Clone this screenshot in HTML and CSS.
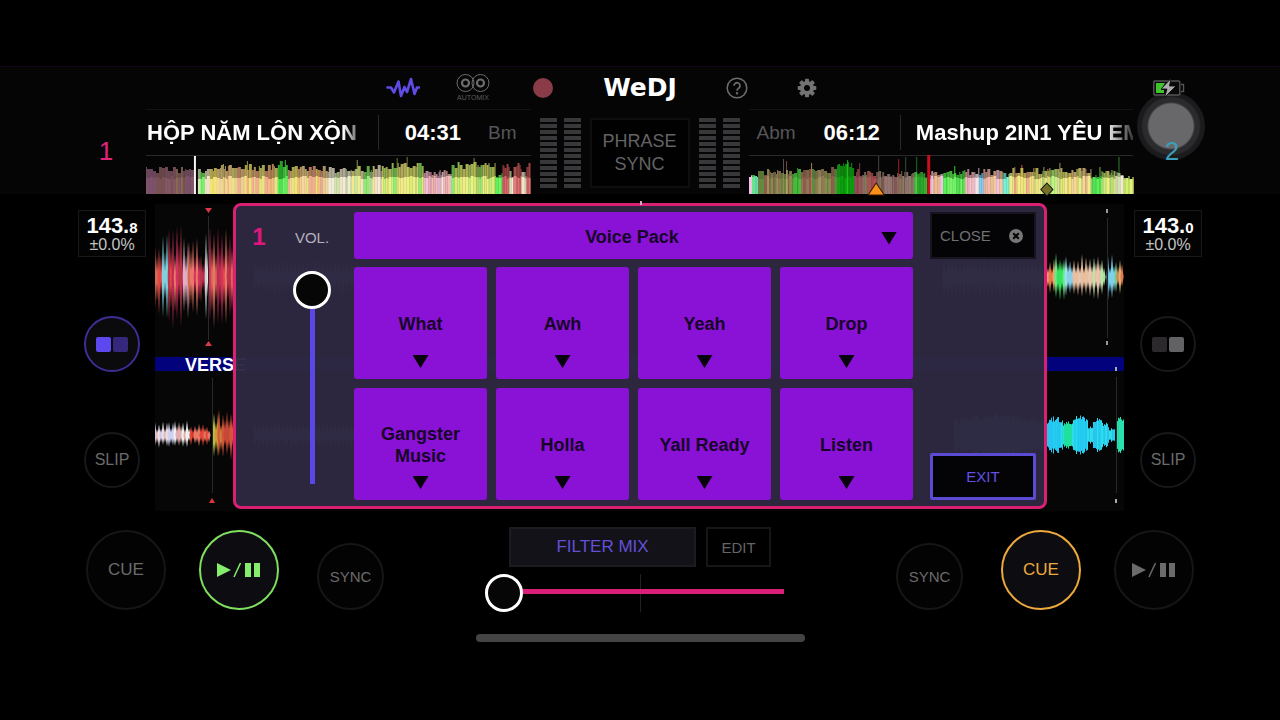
FILE: index.html
```html
<!DOCTYPE html>
<html lang="en">
<head>
<meta charset="utf-8">
<meta name="viewport" content="width=device-width, initial-scale=1">
<title>WeDJ</title>
<link rel="stylesheet" href="styles.css">
</head>
<body>
<header class="top">
  <nav class="toolbar" aria-label="Main">
    <div class="tools tools-left">
      <button class="tool" aria-label="Waveform view">
        <svg width="34" height="22" viewBox="0 0 34 22" fill="none" stroke="#5f4be6" stroke-width="2.6" stroke-linejoin="round" stroke-linecap="round"><path d="M1.500 10.500h3.500l3 5 4.500-11L15 19l3.500-9 2.500 5 4-13 3.500 15 2.500-6.500h2"/></svg>
      </button>
      <button class="tool automix">
        <svg width="34" height="20" viewBox="0 0 34 20" fill="none" stroke="#6c6c6c"><circle cx="9.500" cy="10" r="8.500"/><circle cx="24.500" cy="10" r="8.500"/><circle cx="9.500" cy="10" r="3.500" stroke-width="2.200"/><circle cx="24.500" cy="10" r="3.500" stroke-width="2.200"/></svg>
        <span>AUTOMIX</span>
      </button>
      <button class="tool" aria-label="Record"><span class="record"></span></button>
    </div>
    <h1 class="logo">WeDJ</h1>
    <div class="tools tools-right">
      <button class="tool" aria-label="Help">
        <svg width="22" height="22" viewBox="0 0 22 22" fill="none" stroke="#6e6e6e" stroke-width="1.500"><circle cx="11" cy="11" r="9.800"/><path d="M8 8.800a3 3 0 1 1 4.600 2.500c-1.100.7-1.600 1.200-1.600 2.500" stroke-width="1.700"/><circle cx="11" cy="16.300" r=".5"/></svg>
      </button>
      <button class="tool" aria-label="Settings">
        <svg width="20" height="20" viewBox="-10 -10 20 20" fill="#737373"><rect x="-2" y="-9.300" width="4" height="18.600" rx=".8"/><rect x="-2" y="-9.300" width="4" height="18.600" rx=".8" transform="rotate(45)"/><rect x="-2" y="-9.300" width="4" height="18.600" rx=".8" transform="rotate(90)"/><rect x="-2" y="-9.300" width="4" height="18.600" rx=".8" transform="rotate(135)"/><circle r="7"/><circle r="3" fill="#050506"/></svg>
      </button>
      <svg class="battery" width="32" height="20" viewBox="0 0 32 20" aria-label="Battery charging"><rect x=".8" y="3" width="26" height="14" rx="1" fill="#0a0a0a" stroke="#555" stroke-width="1.400"/><path d="M28 6.500h2.500v7H28" fill="none" stroke="#555" stroke-width="1.400"/><path d="M3 5h9l-4 7h3v3H3z" fill="#3fc32c"/><path d="M18 .5 8 11h6l-2.500 8.500L23 8h-6.500z" fill="#a9a9ae" stroke="#050506" stroke-width=".8"/></svg>
    </div>
  </nav>

  <div class="decks">
    <div class="deck-no deck-no-1">1</div>
    <section class="deck">
      <div class="info">
        <div class="title">HỘP NĂM LỘN XỘN</div>
        <div class="time">04:31</div>
        <div class="key">Bm</div>
      </div>
      <svg class="overview" id="overview1" viewBox="0 0 385 38" preserveAspectRatio="none"></svg>
    </section>
    <div class="mixer">
      <div class="meter"></div>
      <div class="meter"></div>
      <button class="phrase">PHRASE<br>SYNC</button>
      <div class="meter"></div>
      <div class="meter"></div>
    </div>
    <section class="deck deck-2">
      <div class="info">
        <div class="key">Abm</div>
        <div class="time">06:12</div>
        <div class="title">Mashup 2IN1 YÊU EM</div>
      </div>
      <svg class="overview" id="overview2" viewBox="0 0 384 38" preserveAspectRatio="none"></svg>
    </section>
    <div class="deck-no deck-no-2"><span class="touch"></span><span class="digit">2</span></div>
  </div>
</header>

<main class="stage">
  <aside class="side side-1">
    <button class="bpm"><strong>143.<small>8</small></strong><span>±0.0%</span></button>
    <button class="round pads-toggle on" aria-label="Pads"><i></i><i></i></button>
    <button class="round">SLIP</button>
  </aside>

  <div class="waves">
    <div class="lane lane-top"><svg id="lane1" width="200" height="153"></svg><svg id="lane2" width="200" height="153"></svg></div>
    <div class="phrase-bar">VERSE</div>
    <div class="lane"><svg id="lane3" width="200" height="140"></svg><svg id="lane4" width="200" height="154" class="lifted"></svg></div>

    <section class="sampler" aria-label="Sampler">
      <div class="volume">
        <span class="volume-deck">1</span>
        <label for="vol">VOL.</label>
        <input id="vol" class="slider slider-v" type="range" min="0" max="100" value="0">
      </div>
      <div class="bank">
        <div class="pack">
          <select aria-label="Sample pack"><option>Voice Pack</option></select>
          <span class="arrow"></span>
        </div>
        <div class="pads">
          <button class="pad"><span>What</span><i class="arrow"></i></button>
          <button class="pad"><span>Awh</span><i class="arrow"></i></button>
          <button class="pad"><span>Yeah</span><i class="arrow"></i></button>
          <button class="pad"><span>Drop</span><i class="arrow"></i></button>
          <button class="pad"><span>Gangster Music</span><i class="arrow"></i></button>
          <button class="pad"><span>Holla</span><i class="arrow"></i></button>
          <button class="pad"><span>Yall Ready</span><i class="arrow"></i></button>
          <button class="pad"><span>Listen</span><i class="arrow"></i></button>
        </div>
      </div>
      <div class="actions">
        <button class="close">CLOSE
          <svg width="14" height="14" viewBox="0 0 14 14"><circle cx="7" cy="7" r="7" fill="#777"/><path d="m4.200 4.200 5.600 5.600m0-5.600-5.600 5.600" stroke="#050506" stroke-width="2"/></svg>
        </button>
        <button class="exit">EXIT</button>
      </div>
    </section>
  </div>

  <aside class="side side-2">
    <button class="bpm"><strong>143.<small>0</small></strong><span>±0.0%</span></button>
    <button class="round pads-toggle" aria-label="Pads"><i></i><i></i></button>
    <button class="round">SLIP</button>
  </aside>
</main>

<footer class="controls">
  <div class="transport">
    <button class="big">CUE</button>
    <button class="big playing" aria-label="Play / pause"><svg width="44" height="16" viewBox="0 0 44 16" fill="currentColor"><path d="M0 1v14l14-7z"/><path d="M23.500 1 17 15" stroke="currentColor" stroke-width="1.500"/><path d="M28 1h6v14h-6zM37 1h6v14h-6z"/></svg></button>
    <button class="sync">SYNC</button>
  </div>
  <div class="crossfader">
    <div class="fx">
      <button class="filter">FILTER MIX</button>
      <button class="edit">EDIT</button>
    </div>
    <div class="fader"><input class="slider slider-h" type="range" min="0" max="100" value="0" aria-label="Crossfader"></div>
  </div>
  <div class="transport">
    <button class="sync">SYNC</button>
    <button class="big cued">CUE</button>
    <button class="big" aria-label="Play / pause"><svg width="44" height="16" viewBox="0 0 44 16" fill="currentColor"><path d="M0 1v14l14-7z"/><path d="M23.500 1 17 15" stroke="currentColor" stroke-width="1.500"/><path d="M28 1h6v14h-6zM37 1h6v14h-6z"/></svg></button>
  </div>
</footer>
<div class="home"></div>
<script src="waves.js"></script>
</body>
</html>
```

FILE: styles.css
```css
* { box-sizing: border-box; }

body {
  margin: 0;
  padding-top: 66px;
  min-height: 100vh;
  background: #000;
  color: #fff;
  font-family: "Liberation Sans", Arial, sans-serif;
  font-size: 15px;
  overflow-x: hidden;
}

button, select {
  margin: 0;
  padding: 0;
  border: 0;
  background: none;
  color: inherit;
  font: inherit;
}

svg { display: block; }

/* Toolbar */
.top { background: #050506; border-top: 1px solid #14041a; }

.toolbar {
  display: grid;
  grid-template-columns: 1fr auto 1fr;
  align-items: center;
  height: 42px;
}
.tools { display: flex; align-items: center; gap: 26px; }
.tools-left { justify-content: flex-end; margin-right: 36px; }
.tools-right { margin-left: 36px; padding-right: 95px; }
.tool {
  width: 44px;
  height: 36px;
  display: flex;
  flex-direction: column;
  align-items: center;
  justify-content: center;
}
.automix { color: #5c5c5c; font-size: 7px; line-height: 10px; }
.record { width: 20px; height: 20px; border-radius: 50%; background: #893b47; }
.battery { position: relative; z-index: 1; margin-left: auto; }
.logo {
  margin: 0;
  width: 78px;
  text-align: center;
  font: bold 25px/28px "DejaVu Sans", sans-serif;
}

/* Deck headers */
.decks {
  display: grid;
  grid-template-columns: 146px 1fr 218px 1fr 147px;
  height: 85px;
}
.deck { min-width: 0; border-top: 1px solid #141415; }
.deck-no {
  position: relative;
  display: flex;
  align-items: center;
  justify-content: center;
  font-size: 26px;
}
.deck-no-1 { padding-left: 66px; color: #e0247c; }
.deck-no-2 { padding-right: 69px; color: #3b9fba; }
.digit { position: relative; }
.touch {
  position: absolute;
  left: 4px;
  top: -17px;
  width: 68px;
  height: 68px;
  border-radius: 50%;
  background: radial-gradient(circle, #68686a 22px, #2b2b2d 24px, #2b2b2d 28px, #1b1b1d 30px);
}
.info {
  display: flex;
  align-items: center;
  height: 46px;
  border-bottom: 1px solid #29292b;
}
.title {
  flex: 1;
  min-width: 0;
  overflow: hidden;
  white-space: nowrap;
  font-weight: bold;
  font-size: 22px;
  line-height: 35px;
}
.info .title {
  margin-right: 18px;
  padding-left: 1px;
  mask-image: linear-gradient(to right, #000 92%, rgba(0, 0, 0, .3));
}
.time {
  padding-left: 26px;
  border-left: 1px solid #29292b;
  font-weight: bold;
  font-size: 22px;
  line-height: 35px;
}
.key { margin: 0 14px 0 27px; color: #565658; font-size: 19px; }
.deck-2 .key { margin: 0 28px 0 8px; }
.deck-2 .time { padding: 0 20px 0 0; border: 0; border-right: 1px solid #29292b; }
.deck-2 .info .title {
  margin: 0;
  padding-left: 15px;
  mask-image: linear-gradient(to right, #000 88%, rgba(0, 0, 0, .2));
}
.overview { width: 100%; height: 38px; overflow: visible; }

.mixer { display: flex; justify-content: center; gap: 7px; padding: 9px 0 6px; }
.meter {
  width: 17px;
  height: 70px;
  background: repeating-linear-gradient(#38383a 0 4px, #050506 4px 6px);
}
.phrase {
  width: 100px;
  margin: 0 2px;
  height: 70px;
  border: 2px solid #0e0e0f;
  background: #010101;
  color: #636365;
  font-size: 18px;
  line-height: 23px;
}

/* Waveform stage */
.stage {
  display: grid;
  grid-template-columns: 155px 1fr 156px;
  margin-top: 10px;
}
.side { display: flex; flex-direction: column; align-items: center; padding-top: 6px; }
.side-1 { padding-left: 69px; }
.side-2 { padding-right: 68px; }
.bpm {
  width: 68px;
  height: 47px;
  margin-bottom: 59px;
  padding-top: 2px;
  border: 1px solid #19191a;
  background: #030303;
}
.bpm strong { display: block; font-size: 22px; line-height: 18px; }
.bpm small { font-size: 15px; }
.bpm span { display: block; color: #c4c4c4; font-size: 16px; line-height: 15px; }
.round {
  width: 56px;
  height: 56px;
  margin-bottom: 60px;
  border: 2px solid #18181a;
  border-radius: 50%;
  color: #6b6b6d;
  font-size: 16px;
}
.side .round:last-child { margin-bottom: 0; }
.pads-toggle { display: flex; align-items: center; justify-content: center; gap: 2px; }
.pads-toggle i { width: 15px; height: 15px; border-radius: 2px; background: #2b292c; }
.pads-toggle i:last-child { background: #626264; }
.pads-toggle.on { border-color: #3c2e94; background: #0b0b0e; }
.pads-toggle.on i { background: #5d47ee; }
.pads-toggle.on i:last-child { background: #35277c; }

.waves { position: relative; }
.lane { display: flex; justify-content: space-between; height: 140px; background: #060606; }
.lane-top { height: 153px; }
.lifted { margin-top: -14px; position: relative; }
.phrase-bar {
  height: 14px;
  padding-left: 30px;
  background: #02027c;
  font-weight: bold;
  font-size: 18px;
  line-height: 16px;
}

/* Sampler dialog */
.sampler {
  position: absolute;
  inset: -1px 77px 2px 78px;
  display: grid;
  grid-template-columns: 110px 1fr 123px;
  padding: 6px 8px;
  border: 3px solid #d92073;
  border-radius: 8px;
  background: rgba(45, 40, 65, .97);
}
.sampler::before {
  content: "";
  position: absolute;
  left: 50%;
  top: -5px;
  width: 2px;
  height: 4px;
  background: #cfa9bd;
}
.volume {
  display: grid;
  grid-template: 50px 1fr / 30px 1fr;
  align-items: center;
  justify-items: center;
}
.volume-deck { color: #df177c; font-weight: bold; font-size: 24px; }
.volume label { padding-right: 4px; color: #b4b1be; font-size: 15px; }
.volume input { grid-column: 1 / 3; }
.bank { display: flex; flex-direction: column; gap: 8px; }
.pack { display: flex; align-items: center; position: relative; }
.pack select {
  width: 100%;
  height: 47px;
  padding: 2px 3px 0 0;
  border-radius: 3px;
  background: #8a12d6;
  color: #160429;
  font-weight: bold;
  font-size: 18px;
  text-align: center;
  text-align-last: center;
  appearance: none;
}
.pack .arrow { position: absolute; right: 16px; margin-top: 5px; }
.arrow {
  width: 16px;
  height: 13px;
  background: #07020c;
  clip-path: polygon(0 0, 100% 0, 50% 100%);
}
.pads {
  flex: 1;
  display: grid;
  grid-template: 1fr 1fr / repeat(4, 1fr);
  gap: 9px;
}
.pad {
  display: grid;
  grid-template-rows: 1fr auto 1fr;
  justify-items: center;
  padding: 12px 20px 11px;
  border-radius: 3px;
  background: #8a12d6;
  color: #160429;
  font-weight: bold;
  font-size: 18px;
  line-height: 22px;
}
.pad span { grid-row: 2; }
.pad .arrow { grid-row: 3; align-self: end; }
.actions { display: flex; flex-direction: column; justify-content: space-between; margin-left: 17px; }
.close, .exit { height: 47px; background: #040406; }
.close {
  display: flex;
  align-items: center;
  justify-content: space-between;
  padding: 0 11px 0 8px;
  border: 2px solid #15141f;
  color: #707072;
  font-size: 15px;
}
.exit { border: 3px solid #5b4ad3; border-radius: 2px; color: #6350e6; }

/* Sliders */
.slider { appearance: none; margin: 0; background: none; }
.slider::-webkit-slider-thumb {
  appearance: none;
  width: 38px;
  height: 38px;
  border: 3px solid #fff;
  border-radius: 50%;
  background: #060606;
}
.slider-v { writing-mode: vertical-lr; width: 38px; height: 213px; align-self: start; margin: 9px 0 0 26px; }
.slider-v::-webkit-slider-runnable-track {
  width: 38px;
  background: linear-gradient(#5b47e6, #5b47e6) center / 5px 100% no-repeat;
}
.slider-h { width: 100%; height: 38px; }
.slider-h::-webkit-slider-runnable-track {
  height: 38px;
  background: linear-gradient(#da1f78, #da1f78) center 15px / 100% 5px no-repeat;
}

/* Transport */
.controls {
  display: flex;
  justify-content: space-between;
  align-items: flex-end;
  padding: 16px 86px 0;
}
.transport { display: flex; align-items: flex-end; gap: 33px; padding-bottom: 2px; }
.big, .sync {
  display: flex;
  align-items: center;
  justify-content: center;
  width: 80px;
  height: 80px;
  border: 2px solid #161617;
  border-radius: 50%;
  background: #030303;
  color: #6b6b6d;
  font-size: 17px;
}
.sync { width: 67px; height: 67px; margin: 0 0 0 5px; font-size: 15px; }
.sync:first-child { margin: 0 5px 0 0; }
.playing { border-color: #7fe05f; background: #0d0c10; color: #85ee6c; }
.cued { border-color: #eda93c; background: #0d0c10; color: #eda93c; }
.crossfader { width: 310px; }
.fx { display: flex; justify-content: center; gap: 10px; height: 40px; margin-bottom: 7px; }
.filter { width: 187px; border: 2px solid #1c1c20; background: #121218; color: #6350d8; font-size: 17px; }
.edit { width: 65px; border: 2px solid #161616; color: #646466; }
.fader {
  padding-right: 11px;
  background: linear-gradient(#222, #222) center / 1px 100% no-repeat;
}
.fader .slider { display: block; }
.home { width: 329px; height: 8px; margin: 22px auto 0; border-radius: 4px; background: #444; }
```

FILE: waves.js
```js
const NS = 'http://www.w3.org/2000/svg';
let seed = 7;
const rnd = () => (seed = (seed * 16807) % 2147483647) / 2147483647;
const pick = list => list[Math.floor(rnd() * list.length)];

function add(svg, tag, attrs) {
  const el = document.createElementNS(NS, tag);
  for (const k in attrs) el.setAttribute(k, attrs[k]);
  svg.appendChild(el);
}

// Track overview: sections of [start, end, height, palette, dimmed]
function overview(id, sections, spikes) {
  const svg = document.getElementById(id);
  for (const [x, h, fill] of spikes) add(svg, 'rect', { x, y: 38 - h, width: 1, height: h, fill });
  for (const [from, to, height, palette, dim] of sections) {
    let x = from;
    while (x < to) {
      const w = Math.min(1 + Math.floor(rnd() * 3), to - x);
      const h = Math.round(height + rnd() * 7 - 3);
      const low = 15 + Math.round(rnd() * 3);
      const fill = pick(palette);
      add(svg, 'rect', { x, y: 38 - h, width: w, height: h, fill, opacity: dim ? .65 : .72 });
      add(svg, 'rect', { x, y: 38 - low, width: w, height: low, fill, opacity: dim ? .35 : 1 });
      if (!dim) add(svg, 'rect', { x, y: 38 - low, width: w, height: low, fill: '#fff', opacity: .15 });
      x += w;
    }
  }
  return svg;
}

const dusk = ['#b08a6a', '#a86f80', '#9d6a6a', '#a06a88', '#b08a70'];
const warm = ['#f2b070', '#f0e060', '#e8c880', '#f0a080', '#e8e070', '#f5d08a'];
const peach = ['#e8a882', '#f0c090', '#e0a090', '#e8b280'];
const pale = ['#f0e8d0', '#f0b8b0', '#c8e0a0', '#f2dcc0'];
const lime = ['#b8f070', '#e8f070', '#80e860', '#d8e860', '#f0e878'];
const green = ['#40f040', '#60f050', '#38d838'];
const pink = ['#f0b0a8', '#f0b8e0', '#e8a0a8', '#f5e0e0'];
const red = ['#d85a5a', '#e06868', '#d05058'];
const moss = ['#b8b068', '#90a850', '#c09870', '#78b850', '#b87860', '#c8c078'];
const clay = ['#b89c8a', '#c08878', '#a0a070', '#c09890', '#a87070'];

const o1 = overview('overview1', [
  [0, 50, 24, dusk, true], [52, 64, 22, green.concat(pale)], [64, 132, 26, warm], [132, 142, 29, green],
  [142, 182, 25, peach.concat(warm)], [182, 206, 24, pale], [206, 236, 25, lime.concat(pale)], [236, 278, 28, lime],
  [278, 306, 21, pink], [306, 350, 28, lime], [350, 357, 19, green], [357, 364, 28, red],
  [364, 368, 19, pale], [368, 376, 28, red], [376, 381, 20, pale], [381, 385, 28, red]
], [[101, 33, '#8a9a4a'], [139, 34, '#40b838'], [211, 34, '#8a9a4a'], [251, 36, '#6a7a3a'], [261, 37, '#7a7a3a'], [328, 36, '#808040']]);
add(o1, 'rect', { x: 48, y: 0, width: 2, height: 38, fill: '#f4f4f4' });

const o2 = overview('overview2', [
  [0, 3, 16, pink], [3, 9, 15, ['#40c8b0', '#50e070']], [9, 44, 22, moss, true], [44, 52, 23, green, true],
  [52, 88, 23, moss, true], [88, 105, 29, ['#12c812', '#18d818'], true], [105, 132, 21, clay.concat(red), true],
  [132, 165, 19, clay, true], [165, 178, 19, green, true], [180, 194, 21, pink.concat(peach)], [194, 216, 21, green],
  [216, 230, 22, pink], [230, 234, 20, ['#60c8f0']], [234, 254, 21, peach.concat(pink)], [254, 260, 20, ['#60f0d0']],
  [260, 342, 23, lime.concat(warm)], [342, 352, 17, green], [352, 366, 21, lime], [366, 374, 19, pale], [374, 384, 16, ['#e0f068', '#c8f058']]
], [[34, 35, '#565656'], [37, 33, '#7b4438'], [62, 31, '#a88058'], [98, 34, '#1cae1c'], [110, 31, '#7c3048'], [129, 38, '#444'], [149, 35, '#a02020'], [156, 37, '#355035'], [167, 37, '#207020'], [205, 28, '#30d030'], [272, 29, '#c86040'], [310, 31, '#a09050'], [350, 27, '#60c040'], [369, 37, '#308030']]);
add(o2, 'rect', { x: 178, y: -1, width: 3, height: 39, fill: '#c8101c' });
add(o2, 'path', { d: 'M127 27l8 12h-16z', fill: '#f78f18', stroke: '#3a1a00' });
add(o2, 'path', { d: 'M297.500 27l6 6.500-6 6.500-6-6.500z', fill: '#76702a', stroke: '#111' });

// Zoomed waveform: thin mirrored spikes, sections of [start, end, amplitude, palette]
function lane(id, mid, step, width, sections) {
  const svg = document.getElementById(id);
  for (const [from, to, amp, palette] of sections) {
    let tall = true;
    for (let x = from; x < to; x += step) {
      const k = tall ? .75 : .4;
      const up = amp * (k + rnd() * .3), down = amp * (k + rnd() * .3), w = width;
      add(svg, 'path', { d: `M${x - w} ${mid}L${x} ${mid - up}L${x + w} ${mid}L${x} ${mid + down}z`, fill: pick(palette) });
      tall = !tall;
    }
  }
  return svg;
}

// Dense waveform: solid one-pixel columns
function solid(svg, mid, sections) {
  for (const [from, to, amp, palette] of sections) {
    for (let x = from; x < to; x++) {
      const t = (x - from) / (to - from), h = amp * (.75 + .25 * Math.sin(t * Math.PI)) * (.75 + rnd() * .3);
      add(svg, 'rect', { x, y: mid - h, width: 1, height: 2 * h, fill: pick(palette) });
    }
  }
}
function guide(svg, x, y1, y2) {
  add(svg, 'rect', { x, y: y1, width: 1, height: y2 - y1, fill: '#29292b' });
}

const hot = ['#e04848', '#d83060', '#d86850', '#b83848', '#e87868', '#c02858'];
const l1 = lane('lane1', 73, 2, 1.3, [[0, 8, 38, hot], [8, 14, 42, ['#80d0e0', '#a0d8e8', '#90c0d0']], [14, 29, 50, hot], [29, 34, 46, ['#e0b0c0', '#d8a0b8']],
  [34, 46, 42, hot], [46, 51, 26, hot], [51, 55, 42, ['#c8d8d8', '#e0e8e0']], [55, 80, 50, hot], [100, 200, 20, ['#889']]]);
guide(l1, 53, 12, 136);
add(l1, 'path', { d: 'M50 4h7l-3.500 5zM50 142h7l-3.500-5z', fill: '#d83848' });

const l2 = lane('lane2', 73, 2, 1.6, [[20, 120, 22, ['#58a0a0']], [122, 132, 18, ['#e87848', '#f0a070']], [132, 142, 23, ['#38e060', '#60f080']],
  [142, 150, 20, ['#88d0e8', '#a0e0f0']], [150, 182, 22, ['#e8c0a0', '#b8e8a8', '#a8e0a0', '#e8c8b8']], [184, 192, 23, ['#80d0e8', '#60b8e0']], [192, 200, 20, ['#e07850', '#e0b070', '#70d090']]]);
guide(l2, 183, 14, 134);
add(l2, 'path', { d: 'M182 5h2v4h-2zM182 137h2v4h-2z', fill: '#999' });

const l3 = lane('lane3', 64, 2, 1.6, [[0, 14, 13, ['#e8e0e8', '#e8b8b0', '#d0c8f0']], [14, 20, 13, ['#6860e0', '#d0d0f0']], [20, 36, 14, ['#e8e0d8', '#f0f0f0', '#e0b0b0']],
  [36, 56, 11, ['#e04838', '#e87868', '#d03828']], [59, 64, 27, ['#b0c040', '#d09838']], [64, 80, 25, ['#d05838', '#c84838', '#d08040']], [100, 200, 14, ['#889']]]);
guide(l3, 57, 7, 122);
add(l3, 'path', { d: 'M54 132h6l-3-5z', fill: '#d83838' });

const teal = ['#20d0f0', '#28c4f0', '#30dce8'];
const l4 = document.getElementById('lane4');
solid(l4, 78, [[30, 120, 20, ['#408890']], [123, 139, 18, teal], [139, 148, 14, ['#20e0a0', '#28e8b8']], [148, 164, 20, teal],
  [164, 169, 9, teal], [169, 179, 18, teal], [179, 185, 12, teal], [185, 191, 7, teal], [193, 200, 20, ['#20d8a0', '#28e0b0']]]);
guide(l4, 192, 20, 136);
add(l4, 'path', { d: 'M191 10h2v4h-2zM191 142h2v4h-2z', fill: '#aaa' });
```
